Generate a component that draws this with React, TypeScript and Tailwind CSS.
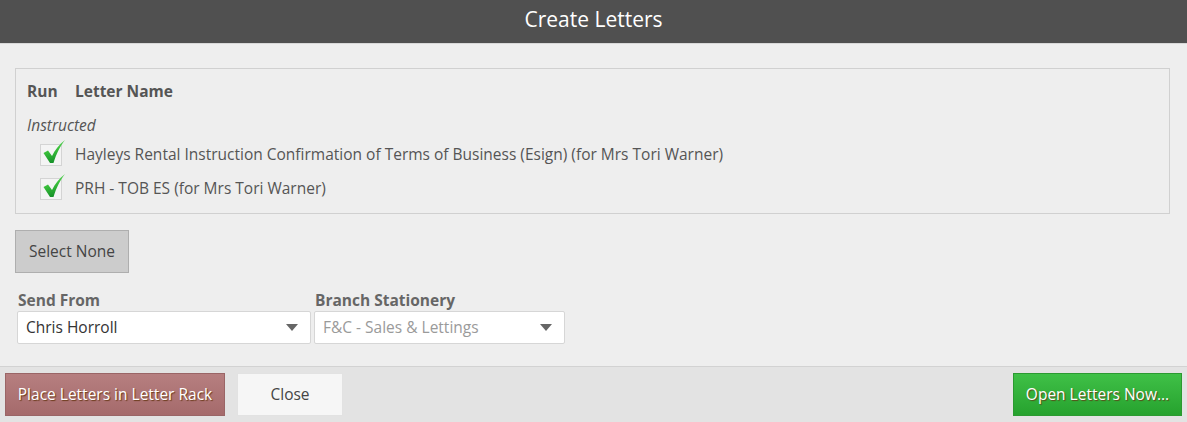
import React from 'react';

const font = { fontFamily: '"Open Sans", "Noto Sans", sans-serif' };

const Check = () => (
  <span className="relative inline-block w-[22px] h-[22px] border border-[#d4d4d4] bg-[#f4f4f4]">
    <svg viewBox="0 0 24 26" className="absolute left-[1px] top-[-6px] w-[24px] h-[26px]">
      <defs>
        <linearGradient id="ck" x1="0" y1="0" x2="0.3" y2="1">
          <stop offset="0" stopColor="#8ae68a" />
          <stop offset="0.5" stopColor="#3cc23c" />
          <stop offset="1" stopColor="#17932a" />
        </linearGradient>
      </defs>
      <path d="M1.5 14 L6 11.5 L10 17 C13 11 17 5.5 23 1 C18.5 7 14.5 14 11.5 24 L8 24 Z" fill="url(#ck)" />
    </svg>
  </span>
);

const Select = ({ value, width, muted }: { value: string; width: string; muted?: boolean }) => (
  <div className={`${width} h-[33px] bg-white border border-[#d6d6d6] rounded-[2px] flex items-center justify-between pl-[8px] pr-[12px]`}>
    <span className={`text-[15.5px] ${muted ? 'text-[#9a9a9a]' : 'text-[#333]'}`}>{value}</span>
    <svg width="12" height="7" viewBox="0 0 12 7"><path d="M0 0 H12 L6 7 Z" fill="#666" /></svg>
  </div>
);

export default function App() {
  return (
    <div className="w-[1187px] h-[422px] bg-[#eeeeee] flex flex-col text-[#555]" style={font}>
      <div className="h-[44px] bg-[#505050] flex items-center justify-center border-b border-[#d8d8d8]">
        <span className="text-white text-[21px] leading-none -mt-[4px]">Create Letters</span>
      </div>

      <div className="flex-1 px-[15px] pt-[24px]">
        <div className="w-[1155px] h-[146px] border border-[#d0d0d0] px-[11px] pt-[13px]">
          <div className="flex text-[15.5px] font-bold text-[#555] h-[20px] items-center">
            <span className="w-[48px]">Run</span>
            <span>Letter Name</span>
          </div>
          <div className="mt-[13px] text-[15.5px] italic text-[#555] h-[20px] leading-[20px]">Instructed</div>
          <div className="mt-[9px] flex flex-col gap-[12px] pl-[13px]">
            <div className="flex items-center gap-[13px] h-[22px]">
              <Check />
              <span className="text-[15.5px] text-[#555]">Hayleys Rental Instruction Confirmation of Terms of Business (Esign) (for Mrs Tori Warner)</span>
            </div>
            <div className="flex items-center gap-[13px] h-[22px]">
              <Check />
              <span className="text-[15.5px] text-[#555]">PRH - TOB ES (for Mrs Tori Warner)</span>
            </div>
          </div>
        </div>

        <button className="mt-[16px] w-[114px] h-[43px] bg-[#cccccc] border border-[#aeaeae] text-[15.5px] text-[#444]">
          Select None
        </button>

        <div className="mt-[17px] flex gap-[3px] pl-[2px]">
          <div className="flex flex-col">
            <span className="text-[15.5px] font-bold text-[#666] leading-[21px] pl-[1px]">Send From</span>
            <Select value="Chris Horroll" width="w-[294px]" />
          </div>
          <div className="flex flex-col">
            <span className="text-[15.5px] font-bold text-[#666] leading-[21px] pl-[1px]">Branch Stationery</span>
            <Select value="F&C - Sales & Lettings" width="w-[251px]" muted />
          </div>
        </div>
      </div>

      <div className="h-[56px] bg-[#e3e3e3] border-t border-[#d2d2d2] flex items-center justify-between px-[5px]">
        <div className="flex items-center gap-[12px]">
          <button className="w-[220px] h-[43px] bg-gradient-to-b from-[#b67f80] to-[#a56a6b] border border-[#9a6566] text-white text-[15.5px] [text-shadow:1px_1px_1px_#6b3a1a]">
            Place Letters in Letter Rack
          </button>
          <button className="w-[106px] h-[43px] bg-[#f6f6f6] border border-[#e2e2e2] text-[#444] text-[15.5px]">
            Close
          </button>
        </div>
        <button className="w-[169px] h-[43px] bg-gradient-to-b from-[#3fc047] to-[#26a22e] border border-[#2b9a31] text-white text-[15.5px] [text-shadow:1px_1px_1px_#5a4a1a]">
          Open Letters Now...
        </button>
      </div>
    </div>
  );
}
